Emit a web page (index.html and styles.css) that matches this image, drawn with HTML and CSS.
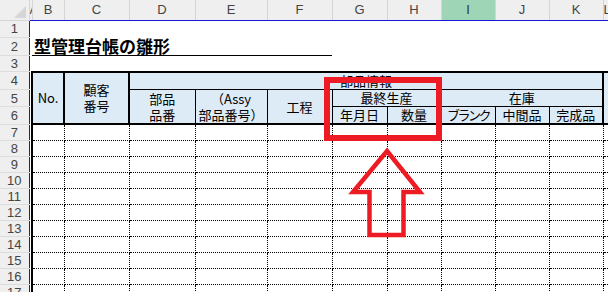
FILE: index.html
```html
<!DOCTYPE html>
<html lang="ja">
<head>
  <meta charset="UTF-8" />
  <meta name="viewport" content="width=device-width, initial-scale=1" />
  <title>型管理台帳の雛形</title>
  <link rel="stylesheet" href="styles.css">
</head>
<body>
  <div class="window">
    <table class="sheet">
      <colgroup>
        <col class="w-rh"><col class="w-a"><col class="w-b"><col class="w-c"><col class="w-d"><col class="w-e">
        <col class="w-f"><col class="w-g"><col class="w-h"><col class="w-i"><col class="w-j"><col class="w-k"><col class="w-l">
      </colgroup>
      <tr class="colhead">
        <th class="corner">
          <svg class="tri" width="12" height="12" viewBox="0 0 12 12"><polygon points="12,0 12,12 0,12" fill="#d6d6d6"/></svg>
        </th>
        <th>A</th><th>B</th><th>C</th><th>D</th><th>E</th><th>F</th>
        <th>G</th><th>H</th><th class="sel">I</th><th>J</th><th>K</th><th>L</th>
      </tr>
      <tr class="h17"><th class="rh">1</th><td colspan="12"></td></tr>
      <tr class="h18">
        <th class="rh">2</th><td></td>
        <td colspan="5" class="title">型管理台帳の雛形</td>
        <td colspan="6"></td>
      </tr>
      <tr class="h16"><th class="rh">3</th><td colspan="12"></td></tr>

      <!-- 見出し -->
      <tr class="h18">
        <th class="rh">4</th><td></td>
        <td rowspan="3" class="hd bl-2 bt-2 br-2 bb-2">No.</td>
        <td rowspan="3" class="hd bt-2 br-2 bb-2">顧客<br>番号</td>
        <td colspan="8" class="hd bt-2 br-2 bb-1">部品情報</td>
        <td rowspan="3" class="hd bt-2 bb-2"></td>
      </tr>
      <tr class="h16">
        <th class="rh">5</th><td></td>
        <td rowspan="2" class="hd br-1 bb-2">部品<br>品番</td>
        <td rowspan="2" class="hd br-1 bb-2">（Assy<br>部品番号）</td>
        <td rowspan="2" class="hd br-1 bb-2">工程</td>
        <td colspan="2" class="hd br-1 bb-1">最終生産</td>
        <td colspan="3" class="hd br-2 bb-1">在庫</td>
      </tr>
      <tr class="h17">
        <th class="rh">6</th><td></td>
        <td class="hd br-1 bb-2">年月日</td>
        <td class="hd br-1 bb-2">数量</td>
        <td class="hd br-1 bb-2 kana">ブランク</td>
        <td class="hd br-1 bb-2">中間品</td>
        <td class="hd br-2 bb-2">完成品</td>
      </tr>

      <!-- 明細行 -->
      <tr class="h16"><th class="rh">7</th><td></td><td class="dt bl-2"></td><td class="dt"></td><td class="dt"></td><td class="dt"></td><td class="dt"></td><td class="dt"></td><td class="dt"></td><td class="dt"></td><td class="dt"></td><td class="dt"></td><td class="dt-end"></td></tr>
      <tr class="h16"><th class="rh">8</th><td></td><td class="dt bl-2"></td><td class="dt"></td><td class="dt"></td><td class="dt"></td><td class="dt"></td><td class="dt"></td><td class="dt"></td><td class="dt"></td><td class="dt"></td><td class="dt"></td><td class="dt-end"></td></tr>
      <tr class="h16"><th class="rh">9</th><td></td><td class="dt bl-2"></td><td class="dt"></td><td class="dt"></td><td class="dt"></td><td class="dt"></td><td class="dt"></td><td class="dt"></td><td class="dt"></td><td class="dt"></td><td class="dt"></td><td class="dt-end"></td></tr>
      <tr class="h16"><th class="rh">10</th><td></td><td class="dt bl-2"></td><td class="dt"></td><td class="dt"></td><td class="dt"></td><td class="dt"></td><td class="dt"></td><td class="dt"></td><td class="dt"></td><td class="dt"></td><td class="dt"></td><td class="dt-end"></td></tr>
      <tr class="h16"><th class="rh">11</th><td></td><td class="dt bl-2"></td><td class="dt"></td><td class="dt"></td><td class="dt"></td><td class="dt"></td><td class="dt"></td><td class="dt"></td><td class="dt"></td><td class="dt"></td><td class="dt"></td><td class="dt-end"></td></tr>
      <tr class="h16"><th class="rh">12</th><td></td><td class="dt bl-2"></td><td class="dt"></td><td class="dt"></td><td class="dt"></td><td class="dt"></td><td class="dt"></td><td class="dt"></td><td class="dt"></td><td class="dt"></td><td class="dt"></td><td class="dt-end"></td></tr>
      <tr class="h16"><th class="rh">13</th><td></td><td class="dt bl-2"></td><td class="dt"></td><td class="dt"></td><td class="dt"></td><td class="dt"></td><td class="dt"></td><td class="dt"></td><td class="dt"></td><td class="dt"></td><td class="dt"></td><td class="dt-end"></td></tr>
      <tr class="h16"><th class="rh">14</th><td></td><td class="dt bl-2"></td><td class="dt"></td><td class="dt"></td><td class="dt"></td><td class="dt"></td><td class="dt"></td><td class="dt"></td><td class="dt"></td><td class="dt"></td><td class="dt"></td><td class="dt-end"></td></tr>
      <tr class="h16"><th class="rh">15</th><td></td><td class="dt bl-2"></td><td class="dt"></td><td class="dt"></td><td class="dt"></td><td class="dt"></td><td class="dt"></td><td class="dt"></td><td class="dt"></td><td class="dt"></td><td class="dt"></td><td class="dt-end"></td></tr>
      <tr class="h16"><th class="rh">16</th><td></td><td class="dt bl-2"></td><td class="dt"></td><td class="dt"></td><td class="dt"></td><td class="dt"></td><td class="dt"></td><td class="dt"></td><td class="dt"></td><td class="dt"></td><td class="dt"></td><td class="dt-end"></td></tr>
      <tr class="h16"><th class="rh">17</th><td></td><td class="dt bl-2"></td><td class="dt"></td><td class="dt"></td><td class="dt"></td><td class="dt"></td><td class="dt"></td><td class="dt"></td><td class="dt"></td><td class="dt"></td><td class="dt"></td><td class="dt-end"></td></tr>
    </table>

    <!-- 赤い注釈（枠と矢印） -->
    <svg class="markup" width="608" height="292" viewBox="0 0 608 292">
      <rect x="327" y="80" width="112" height="58" fill="none" stroke="#ed1c24" stroke-width="6"/>
      <polygon points="387,151 420,192 403.5,192 403.5,235 369.5,235 369.5,192 353,192"
               fill="none" stroke="#ed1c24" stroke-width="4.5" stroke-linejoin="miter"/>
    </svg>
  </div>
</body>
</html>
```

FILE: styles.css
```css
/* ページ全体 */
body {
  margin: 0;
  background-color: #ffffff;
  overflow: hidden;
}

.window {
  position: relative;
  width: 608px;
  height: 292px;
  overflow: hidden;
}

/* シート */
.sheet {
  border-collapse: collapse;
  table-layout: fixed;
  width: 608px;
  font-family: "Noto Sans CJK JP", sans-serif;
  font-size: 13px;
  color: #000;
}

.sheet th,
.sheet td {
  padding: 0;
  overflow: hidden;
  white-space: nowrap;
}

/* 列幅 */
.w-rh { width: 29px; }
.w-a { width: 3px; }
.w-b { width: 32px; }
.w-c { width: 65px; }
.w-d { width: 66px; }
.w-e { width: 72px; }
.w-f { width: 65px; }
.w-g { width: 55px; }
.w-h { width: 54px; }
.w-i { width: 54px; }
.w-j { width: 54px; }
.w-k { width: 54px; }
.w-l { width: 5px; }

/* 行の高さ */
.h16 { height: 16px; }
.h17 { height: 17px; }
.h18 { height: 18px; }

/* 列見出し */
.colhead {
  height: 20px;
}

.colhead th {
  background-color: #efefef;
  color: #444;
  font-family: "Liberation Sans", Arial, sans-serif;
  font-size: 13px;
  font-weight: normal;
  border-right: 1px solid #d5d5d5;
  border-bottom: 1px solid #1717d9;
}

.colhead .corner {
  position: relative;
  border-bottom: 1px solid #d5d5d5;
  border-right: 1px solid #d5d5d5;
}

.tri {
  position: absolute;
  right: 3px;
  bottom: 2px;
}

.colhead .sel {
  background-color: #9fd5b7;
  color: #333;
}

/* 行見出し */
.rh {
  background-color: #efefef;
  color: #444;
  font-family: "Liberation Sans", Arial, sans-serif;
  font-size: 13px;
  font-weight: normal;
  text-align: center;
  border-bottom: 1px solid #dcdcdc;
  border-right: 1px solid #1717d9;
}

/* タイトル */
.title {
  font-size: 17px;
  font-weight: 700;
  line-height: 18px;
  vertical-align: bottom;
  padding-left: 2px !important;
  border-bottom: 1px solid #000;
}

/* 表の見出し */
.hd {
  background-color: #ddebf7;
  text-align: center;
  vertical-align: middle;
  line-height: 16px;
}

.kana {
  letter-spacing: -2.5px;
}

/* 罫線 */
.bt-2 { border-top: 2px solid #000; }
.bb-2 { border-bottom: 2px solid #000; }
.bl-2 { border-left: 2px solid #000; }
.br-2 { border-right: 2px solid #000; }
.br-1 { border-right: 1px solid #000; }
.bb-1 { border-bottom: 1px solid #000; }

/* 明細セル（点線） */
.dt {
  border-right: 1px dotted #000;
  border-bottom: 1px dotted #000;
}

.dt-end {
  border-bottom: 1px dotted #000;
}

/* 注釈 */
.markup {
  position: absolute;
  left: 0;
  top: 0;
  pointer-events: none;
}
```
